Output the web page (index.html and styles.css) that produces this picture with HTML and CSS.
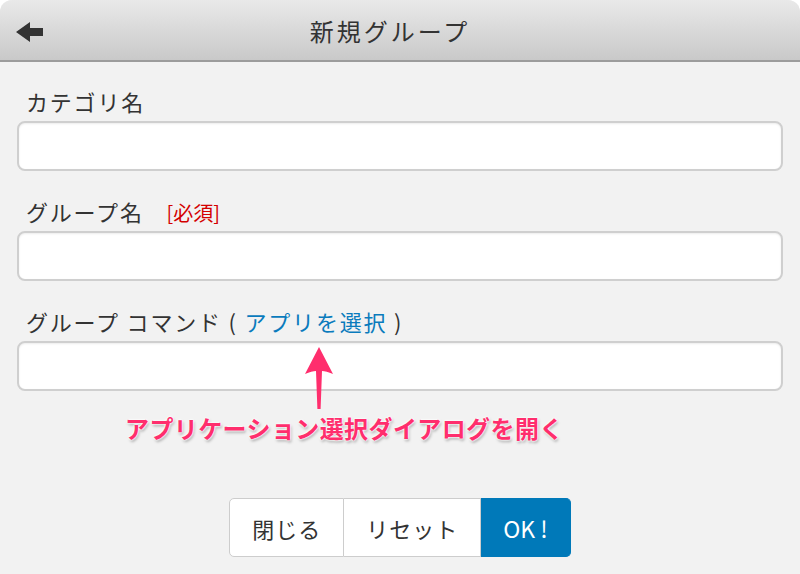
FILE: index.html
```html
<!DOCTYPE html>
<html lang="ja">
<head>
    <meta charset="UTF-8">
    <meta name="viewport" content="width=device-width, initial-scale=1.0">
    <title>新規グループ</title>
    <link rel="stylesheet" href="styles.css">
</head>
<body>
    <div class="dialog">
        <div class="header">
            <a class="back" href="#">
                <svg width="30" height="24" viewBox="0 0 30 24">
                    <polygon points="1,11 15,1 15,7 28,7 28,15 15,15 15,21" fill="#333"/>
                </svg>
            </a>
            <h1>新規グループ</h1>
        </div>
        <div class="form">
            <div class="field">
                <label>カテゴリ名</label>
                <input type="text" class="text-input">
            </div>
            <div class="field">
                <label>グループ名 <span class="required">[必須]</span></label>
                <input type="text" class="text-input">
            </div>
            <div class="field">
                <label>グループ コマンド ( <a href="#" class="app-link">アプリを選択</a> )</label>
                <input type="text" class="text-input">
            </div>
            <div class="note">
                <svg class="note-arrow" width="32" height="64" viewBox="0 0 32 64">
                    <path d="M16 1 L30 28 Q23 25 19 25 L17.6 63 L14.4 63 L13 25 Q9 25 2 28 Z" fill="#ff2e6d"/>
                </svg>
                <p class="note-text">アプリケーション選択ダイアログを開く</p>
            </div>
        </div>
        <div class="buttons">
            <button class="btn">閉じる</button>
            <button class="btn">リセット</button>
            <button class="btn btn-ok">OK !</button>
        </div>
    </div>
</body>
</html>
```

FILE: styles.css
```css
body {
    margin: 0;
    background-color: #ffffff;
    font-family: "Noto Sans CJK JP", "Noto Sans", sans-serif;
    color: #333;
}
.dialog {
    height: 574px;
    background-color: #f2f2f2;
    border-radius: 12px 12px 0 0;
    overflow: hidden;
    display: flex;
    flex-direction: column;
}
.header {
    height: 60px;
    border-bottom: 2px solid #9c9c9c;
    background: linear-gradient(#e9e9e9, #c9c9c9);
    display: flex;
    align-items: center;
    justify-content: center;
    position: relative;
}
.back {
    position: absolute;
    left: 15px;
    top: 21px;
    display: block;
    height: 24px;
}
.header h1 {
    margin: 0;
    font-size: 24px;
    font-weight: normal;
    letter-spacing: 3px;
    color: #333;
    padding-right: 20px;
}
.form {
    padding: 24px 17px 0 17px;
    display: flex;
    flex-direction: column;
    gap: 25px;
}
.field {
    display: flex;
    flex-direction: column;
    gap: 5px;
}
.field label {
    display: block;
    height: 30px;
    line-height: 30px;
    padding-left: 9px;
    font-size: 22px;
    letter-spacing: 1.8px;
    color: #333;
}
.required {
    color: #d40000;
    font-size: 20px;
    letter-spacing: 0;
    margin-left: 16px;
}
.app-link {
    color: #0a7bbd;
    text-decoration: none;
}
.text-input {
    box-sizing: border-box;
    height: 50px;
    width: 100%;
    margin: 0;
    border: 2px solid #cfcfcf;
    border-radius: 8px;
    background: #fff;
    box-shadow: inset 0 1px 2px rgba(0,0,0,0.08);
    font-size: 20px;
    padding: 0 10px;
}
.note {
    position: relative;
    margin-top: -25px;
    height: 92px;
}
.note-arrow {
    position: absolute;
    left: 286px;
    top: -45px;
}
.note-text {
    margin: 0;
    padding: 22px 0 0 108px;
    font-size: 24px;
    font-weight: bold;
    line-height: 30px;
    letter-spacing: 0.4px;
    color: #ff2e6d;
    text-shadow: 0 0 2px #fff, 0 0 2px #fff, 0 0 3px #fff, 1px 2px 3px rgba(0,0,0,0.35);
}
.buttons {
    display: flex;
    justify-content: center;
    margin-top: 15px;
}
.btn {
    height: 59px;
    margin: 0;
    padding: 0 22px;
    font-family: "Noto Sans CJK JP", "Noto Sans", sans-serif;
    font-size: 22px;
    color: #333;
    background: #fff;
    border: 1px solid #cdcdcd;
    border-left: none;
    letter-spacing: 1px;
}
.btn:first-child {
    border-left: 1px solid #cdcdcd;
    border-radius: 5px 0 0 5px;
}
.btn-ok {
    background: #0079b9;
    border-color: #0079b9;
    color: #fff;
    border-radius: 0 5px 5px 0;
    padding: 0 22px;
    font-size: 23px;
    letter-spacing: 0;
}
```
